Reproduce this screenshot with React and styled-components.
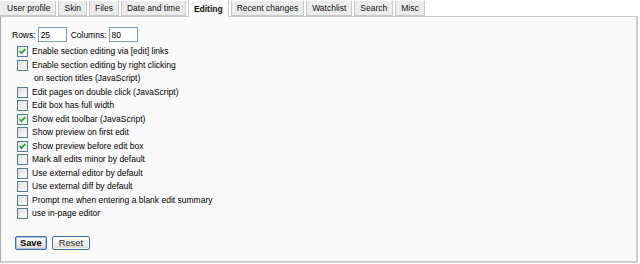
import React from "react";
import styled, { createGlobalStyle } from "styled-components";

const Global = createGlobalStyle`
  html, body { margin: 0; padding: 0; background: #fff; }
  body { font-family: "Liberation Sans", Arial, sans-serif; font-size: 8.5px; color: #000; }
`;

const Page = styled.div`
  width: 640px;
  height: 264px;
  display: flex;
  flex-direction: column;
`;

const TabBar = styled.div`
  display: flex;
  gap: 2px;
  height: 17px;
  align-items: flex-start;
  position: relative;
  z-index: 1;
`;

const Tab = styled.div`
  height: ${(p) => (p.$active ? "17px" : "15px")};
  box-sizing: border-box;
  padding: 0 5px;
  display: flex;
  align-items: center;
  border: 1px solid #c8c8c8;
  border-top: none;
  border-bottom: ${(p) => (p.$active ? "none" : "1px solid #c8c8c8")};
  background: ${(p) => (p.$active ? "#fafafa" : "#ececec")};
  font-weight: ${(p) => (p.$active ? "bold" : "normal")};
  font-size: 8.5px;
  color: #111;
  white-space: nowrap;
  margin-top: ${(p) => (p.$active ? "0" : "1px")};
  &:first-child { border-left: none; padding-left: 7px; }
`;

const Panel = styled.div`
  margin-top: -1px;
  width: 638px;
  height: 247px;
  box-sizing: border-box;
  border: 1px solid #c8c8c8;
  border-right: 2px solid #cfcfcf;
  border-bottom: 2px solid #cfcfcf;
  border-left: 1px solid #aaa;
  background: #fafafa;
  padding: 10px 0 0 11px;
  display: flex;
  flex-direction: column;
`;

const SizeRow = styled.div`
  display: flex;
  align-items: center;
  gap: 2px;
  height: 15px;
  margin-bottom: 3px;
`;

const TextBox = styled.div`
  width: 29px;
  height: 15px;
  box-sizing: border-box;
  border: 1px solid #7f9db9;
  background: #fff;
  padding: 0 2px;
  display: flex;
  align-items: center;
  margin-right: 2px;
`;

const List = styled.div`
  display: flex;
  flex-direction: column;
  padding-left: 5px;
`;

const Item = styled.label`
  display: flex;
  align-items: flex-start;
  gap: 3px;
  line-height: 13.5px;
`;

const BoxWrap = styled.span`
  width: 11px;
  height: 11px;
  margin-top: 1px;
  flex: none;
  display: block;
`;

const Label = styled.span`
  display: block;
  margin-left: 1px;
`;

const Line = styled.div`
  padding-left: ${(p) => (p.$cont ? "2px" : "0")};
`;

const Buttons = styled.div`
  display: flex;
  gap: 5px;
  margin-top: 15px;
  padding-left: 3px;
`;

const Button = styled.div`
  height: 14px;
  box-sizing: border-box;
  padding: 0 ${(p) => (p.$bold ? "4px" : "6px")};
  border: 1px solid #3d6ea6;
  border-radius: 2px;
  background: linear-gradient(#ffffff, #ecebe6 70%, #d6d0c5);
  display: flex;
  align-items: center;
  font-weight: ${(p) => (p.$bold ? "bold" : "normal")};
  font-size: 9.3px;
  color: ${(p) => (p.$bold ? "#000" : "#222")};
  box-shadow: inset 0 0 0 1px ${(p) => (p.$bold ? "#a9c4ea" : "#fff")};
`;

function CheckBox({ checked }) {
  return (
    <BoxWrap>
      <svg width="11" height="11" viewBox="0 0 11 11">
        <defs>
          <linearGradient id="cbg" x1="0" y1="0" x2="1" y2="1">
            <stop offset="0" stopColor="#dcdcd6" />
            <stop offset="1" stopColor="#ffffff" />
          </linearGradient>
        </defs>
        <rect x="0.5" y="0.5" width="10" height="10" fill="url(#cbg)" stroke="#1c5180" strokeOpacity="0.75" />
        {checked && (
          <path d="M2.6 5.2 L4.4 7.1 L8.3 3.1" fill="none" stroke="#21a121" strokeWidth="1.6" />
        )}
      </svg>
    </BoxWrap>
  );
}

const tabs = [
  "User profile",
  "Skin",
  "Files",
  "Date and time",
  "Editing",
  "Recent changes",
  "Watchlist",
  "Search",
  "Misc",
];

const options = [
  { t: ["Enable section editing via [edit] links"], c: true },
  { t: ["Enable section editing by right clicking", "on section titles (JavaScript)"] },
  { t: ["Edit pages on double click (JavaScript)"] },
  { t: ["Edit box has full width"] },
  { t: ["Show edit toolbar (JavaScript)"], c: true },
  { t: ["Show preview on first edit"] },
  { t: ["Show preview before edit box"], c: true },
  { t: ["Mark all edits minor by default"] },
  { t: ["Use external editor by default"] },
  { t: ["Use external diff by default"] },
  { t: ["Prompt me when entering a blank edit summary"] },
  { t: ["use in-page editor"] },
];

export default function App() {
  return (
    <>
      <Global />
      <Page>
        <TabBar>
          {tabs.map((t) => (
            <Tab key={t} $active={t === "Editing"}>
              {t}
            </Tab>
          ))}
        </TabBar>
        <Panel>
          <SizeRow>
            <span>Rows:</span>
            <TextBox>25</TextBox>
            <span>Columns:</span>
            <TextBox>80</TextBox>
          </SizeRow>
          <List>
            {options.map((o, i) => (
              <Item key={i}>
                <CheckBox checked={o.c} />
                <Label>
                  {o.t.map((line, j) => (
                    <Line key={j} $cont={j > 0}>{line}</Line>
                  ))}
                </Label>
              </Item>
            ))}
          </List>
          <Buttons>
            <Button $bold>Save</Button>
            <Button>Reset</Button>
          </Buttons>
        </Panel>
      </Page>
    </>
  );
}
